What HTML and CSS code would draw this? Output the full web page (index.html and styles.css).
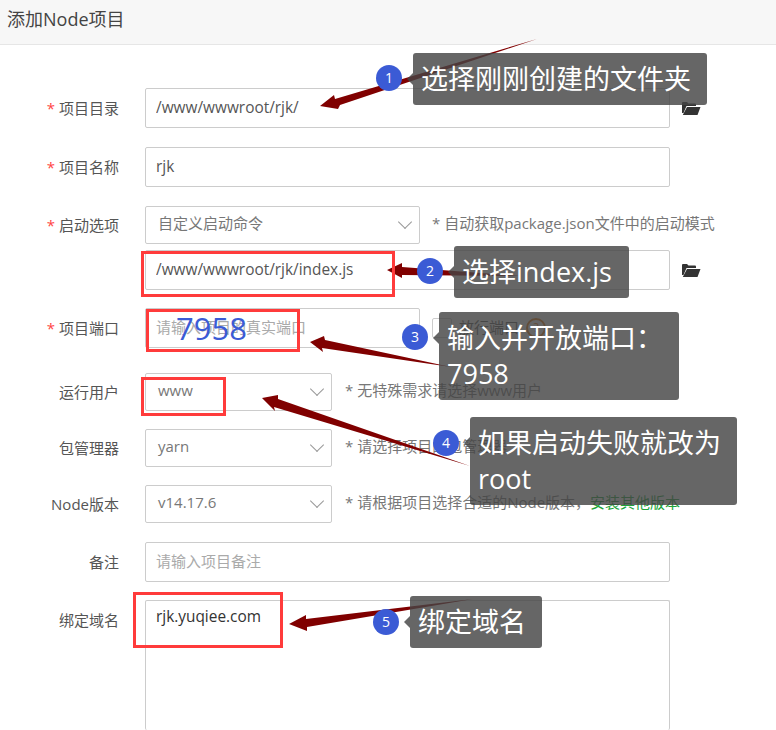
FILE: index.html
```html
<!DOCTYPE html>
<html lang="zh-CN">
<head>
    <meta charset="UTF-8">
    <title>添加Node项目</title>
    <link rel="stylesheet" href="styles.css">
</head>
<body>
    <header class="title">添加Node项目</header>

    <main class="form">
        <div class="row row-path">
            <label class="label"><em>*</em> 项目目录</label>
            <input class="input wide" type="text" value="/www/wwwroot/rjk/">
            <svg class="folder" viewBox="0 0 19 14"><path d="M0 12V2q0-1 1-1h4l1.500 1.500H13q1 0 1 1V5H4.500L1.500 12zM5 6h13.500L15.500 14H.8z"/></svg>
        </div>
        <div class="row row-name">
            <label class="label"><em>*</em> 项目名称</label>
            <input class="input wide" type="text" value="rjk">
        </div>
        <div class="row row-start">
            <label class="label"><em>*</em> 启动选项</label>
            <div class="select mid">自定义启动命令<i class="chevron"></i></div>
            <span class="hint hint-start">* 自动获取package.json文件中的启动模式</span>
        </div>
        <div class="row row-script">
            <span class="label"></span>
            <input class="input wide" type="text" value="/www/wwwroot/rjk/index.js">
            <svg class="folder" viewBox="0 0 19 14"><path d="M0 12V2q0-1 1-1h4l1.500 1.500H13q1 0 1 1V5H4.500L1.500 12zM5 6h13.500L15.500 14H.8z"/></svg>
        </div>
        <div class="row row-port">
            <label class="label"><em>*</em> 项目端口</label>
            <input class="input mid" type="text" placeholder="请输入项目的真实端口">
            <span class="check"></span>
            <span class="check-text">放行端口</span>
            <span class="help">?</span>
        </div>
        <div class="row row-user">
            <label class="label">运行用户</label>
            <div class="select short">www<i class="chevron"></i></div>
            <span class="hint">* 无特殊需求请选择www用户</span>
        </div>
        <div class="row row-pkg">
            <label class="label">包管理器</label>
            <div class="select short">yarn<i class="chevron"></i></div>
            <span class="hint">* 请选择项目的包管理器</span>
        </div>
        <div class="row row-node">
            <label class="label">Node版本</label>
            <div class="select short">v14.17.6<i class="chevron"></i></div>
            <span class="hint">* 请根据项目选择合适的Node版本，<a class="link" href="#">安装其他版本</a></span>
        </div>
        <div class="row row-note">
            <label class="label">备注</label>
            <input class="input wide" type="text" placeholder="请输入项目备注">
        </div>
        <div class="row row-domain">
            <label class="label label-top">绑定域名</label>
            <textarea class="input wide area">rjk.yuqiee.com</textarea>
        </div>
    </main>

    <!-- annotations drawn over the form -->
    <svg class="arrows" viewBox="0 0 776 730">
        <polygon points="320,106 334,95 335,99 537,39 340,105 338,109"/>
        <polygon points="387,270 402,263 402,267 520,276 402,275 402,278"/>
        <polygon points="310,342 324,336 325,340 451,367 322,348 323,352"/>
        <polygon points="262,398 278,395 278,399 470,466 274,407 275,411"/>
        <polygon points="289,624 306,615 306,619 473,599 307,627 307,631"/>
    </svg>

    <span class="box box-script"></span>
    <span class="box box-port"></span>
    <span class="box box-user"></span>
    <span class="box box-domain"></span>
    <span class="port-number">7958</span>

    <span class="dot dot-1">1</span>
    <span class="dot dot-2">2</span>
    <span class="dot dot-3">3</span>
    <span class="dot dot-4">4</span>
    <span class="dot dot-5">5</span>

    <div class="tip tip-1">选择刚刚创建的文件夹</div>
    <div class="tip tip-2">选择index.js</div>
    <div class="tip tip-3">输入并开放端口：7958</div>
    <div class="tip tip-4">如果启动失败就改为root</div>
    <div class="tip tip-5">绑定域名</div>
</body>
</html>
```

FILE: styles.css
```css
body {
    font-family: "Open Sans", "Noto Sans CJK SC", sans-serif;
    font-size: 15px;
    color: #555;
    background-color: #fff;
    margin: 0;
    height: 730px;
    position: relative;
    overflow: hidden;
}

/* Title bar */
.title {
    height: 44px;
    line-height: 38px;
    padding-left: 7px;
    font-size: 18px;
    color: #444;
    background-color: #f7f7f7;
    border-bottom: 1px solid #e6e6e6;
}

/* Form rows */
.form {
    padding-top: 43px;
}

.row {
    display: flex;
    align-items: center;
}

.row-name { margin-top: 19px; }
.row-start { margin-top: 19px; }
.row-script { margin-top: 6px; }
.row-port { margin-top: 18px; }
.row-user { margin-top: 25px; }
.row-pkg { margin-top: 18px; }
.row-node { margin-top: 18px; }
.row-note { margin-top: 19px; }
.row-domain { margin-top: 18px; align-items: flex-start; }

.label {
    width: 119px;
    margin-right: 26px;
    padding-bottom: 1px;
    flex-shrink: 0;
    text-align: right;
    color: #555;
}

.label em {
    color: #f44;
    font-style: normal;
}

.label-top {
    padding-top: 9px;
}

.input,
.select {
    box-sizing: border-box;
    border: 1px solid #ccc;
    border-radius: 2px;
    background-color: #fff;
    font-family: inherit;
    font-size: 15px;
}

.input {
    height: 40px;
    padding: 0 10px 1px;
    font-size: 15.400px;
    color: #555;
    outline: none;
}

.input::placeholder {
    font-size: 15px;
    color: #aaa;
}

.select {
    height: 38px;
    line-height: 32px;
    padding-left: 12px;
    color: #777;
    position: relative;
}

.wide { width: 525px; }
.mid { width: 275px; }
.short { width: 187px; }

/* runs past the bottom of the window */
.area {
    height: 130px;
    padding-top: 5px;
    line-height: 22px;
    color: #333;
    border-bottom: none;
    resize: none;
}

.chevron {
    position: absolute;
    right: 9px;
    top: 10px;
    width: 9px;
    height: 9px;
    border-right: 1px solid #999;
    border-bottom: 1px solid #999;
    transform: rotate(45deg);
}

.hint {
    margin-left: 13px;
    padding-bottom: 5px;
    font-size: 15px;
    color: #777;
}

.hint-start {
    margin-left: 12px;
}

.link {
    color: #20a53a;
    text-decoration: none;
}

.folder {
    width: 19px;
    height: 14px;
    margin-left: 12px;
    fill: #333;
}

.check {
    box-sizing: border-box;
    width: 20px;
    height: 20px;
    margin-left: 12px;
    border: 1px solid #ccc;
    border-radius: 2px;
}

.check-text {
    margin-left: 7px;
    padding-bottom: 3px;
    font-size: 15px;
}

.help {
    box-sizing: border-box;
    width: 20px;
    height: 20px;
    margin-left: 7px;
    border: 2px solid #e8760a;
    border-radius: 50%;
    line-height: 16px;
    text-align: center;
    font-size: 12px;
    color: #e8760a;
}

/* Annotation layer */
.arrows {
    position: absolute;
    left: 0;
    top: 0;
    width: 776px;
    height: 730px;
    fill: #800000;
}

.box {
    position: absolute;
    box-sizing: border-box;
    border: 3px solid #ff3b3b;
}

.box-script { left: 141px; top: 251px; width: 254px; height: 46px; }
.box-port { left: 146px; top: 309px; width: 154px; height: 43px; }
.box-user { left: 141px; top: 377px; width: 85px; height: 39px; }
.box-domain { left: 133px; top: 592px; width: 150px; height: 56px; }

.port-number {
    position: absolute;
    left: 176px;
    top: 308px;
    font-size: 31px;
    line-height: 40px;
    color: #3b5bd5;
}

.dot {
    position: absolute;
    width: 26px;
    height: 26px;
    border-radius: 50%;
    background-color: #3b5bd5;
    color: #fff;
    font-size: 14px;
    line-height: 26px;
    text-align: center;
}

.dot-1 { left: 376px; top: 65px; }
.dot-2 { left: 417px; top: 258px; }
.dot-3 { left: 402px; top: 324px; }
.dot-4 { left: 433px; top: 430px; }
.dot-5 { left: 373px; top: 609px; }

.tip {
    position: absolute;
    box-sizing: border-box;
    padding: 8px;
    border-radius: 3px;
    background-color: rgba(68, 68, 68, 0.82);
    color: #fff;
    font-size: 27px;
    line-height: 36px;
}

.tip::before {
    content: "";
    position: absolute;
    left: -6px;
    top: 20px;
    border-top: 6px solid transparent;
    border-bottom: 6px solid transparent;
    border-right: 6px solid rgba(68, 68, 68, 0.82);
}

.tip-1 { left: 413px; top: 53px; width: 294px; }
.tip-2 { left: 454px; top: 246px; width: 175px; }
.tip-3 { left: 439px; top: 312px; width: 240px; }
.tip-4 { left: 470px; top: 417px; width: 267px; }
.tip-5 { left: 410px; top: 596px; width: 132px; }
```
